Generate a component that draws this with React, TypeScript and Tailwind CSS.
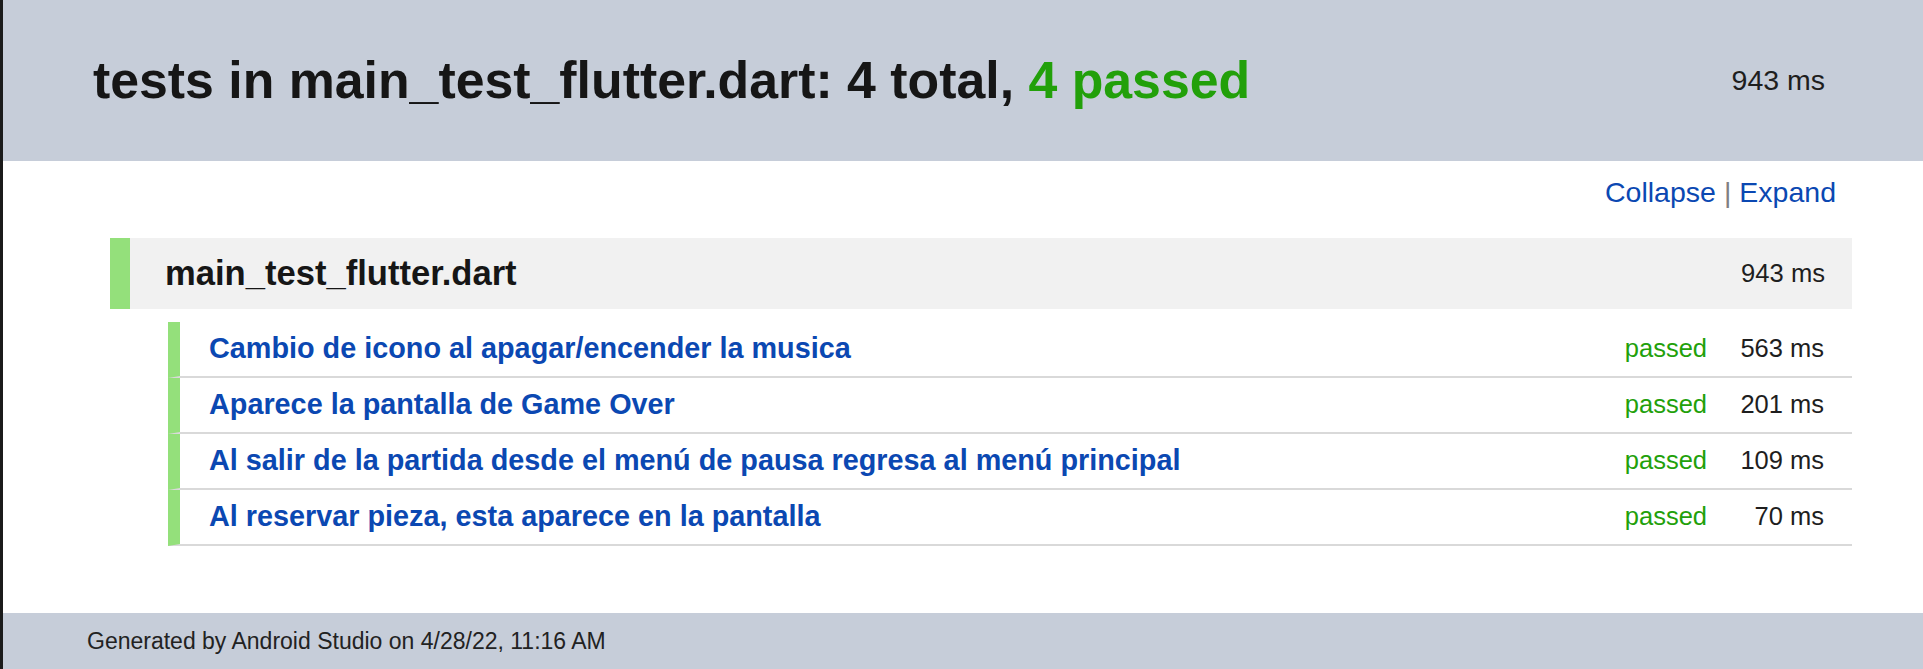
const TESTS = [
  { name: 'Cambio de icono al apagar/encender la musica', result: 'passed', ms: '563 ms' },
  { name: 'Aparece la pantalla de Game Over', result: 'passed', ms: '201 ms' },
  { name: 'Al salir de la partida desde el menú de pausa regresa al menú principal', result: 'passed', ms: '109 ms' },
  { name: 'Al reservar pieza, esta aparece en la pantalla', result: 'passed', ms: '70 ms' },
];

export default function App() {
  return (
    <div className="min-h-screen bg-white border-l-[3px] border-[#1b1b1b] font-['Liberation_Sans',Arial,sans-serif] text-[#1a1a1a]">
      {/* header */}
      <header className="h-[161px] bg-[#c6cdd9] flex items-center justify-between pl-[90px] pr-[98px]">
        <h1 className="text-[51.8px] font-bold leading-[1.15] text-[#161616]">
          tests in main_test_flutter.dart: 4 total, <span className="text-[#22a00a]">4 passed</span>
        </h1>
        <span className="text-[28.5px] leading-[1.15] text-[#1e1e1e]">943 ms</span>
      </header>

      <main className="pt-[15px] pb-[67px]">
        <div className="flex justify-end pr-[87px] text-[28.5px] leading-[32px]">
          <a className="text-[#0b48b2]">Collapse</a>
          <span className="mx-[8px] text-[#808080]">|</span>
          <a className="text-[#0b48b2]">Expand</a>
        </div>

        {/* suite */}
        <div className="mt-[30px] ml-[107px] mr-[71px] h-[71px] bg-[#f1f1f1] border-l-[20px] border-[#94e07b] flex items-center justify-between pl-[35px] pr-[27px]">
          <span className="text-[34.6px] font-bold leading-[1.15] text-[#161616]">main_test_flutter.dart</span>
          <span className="text-[25.6px] leading-[1.15] text-[#1e1e1e]">943 ms</span>
        </div>

        {/* tests */}
        <div className="mt-[13px] ml-[165px] mr-[71px]">
          {TESTS.map((t) => (
            <div
              key={t.name}
              className="h-[56px] border-l-[12px] border-l-[#94e07b] border-b-2 border-b-[#d9d9d9] flex items-center pl-[29px] pr-[28px]"
            >
              <span className="flex-1 text-[28.8px] font-bold leading-[1.15] text-[#0b48b2]">{t.name}</span>
              <span className="text-[25.5px] leading-[1.15] text-[#22a00a]">{t.result}</span>
              <span className="w-[117px] text-right text-[25.5px] leading-[1.15] text-[#1e1e1e]">{t.ms}</span>
            </div>
          ))}
        </div>
      </main>

      <footer className="h-[56px] bg-[#c6cdd9] pl-[84px] pt-[15px]">
        <span className="text-[23px] leading-[1.15] text-[#222]">Generated by Android Studio on 4/28/22, 11:16 AM</span>
      </footer>
    </div>
  );
}
